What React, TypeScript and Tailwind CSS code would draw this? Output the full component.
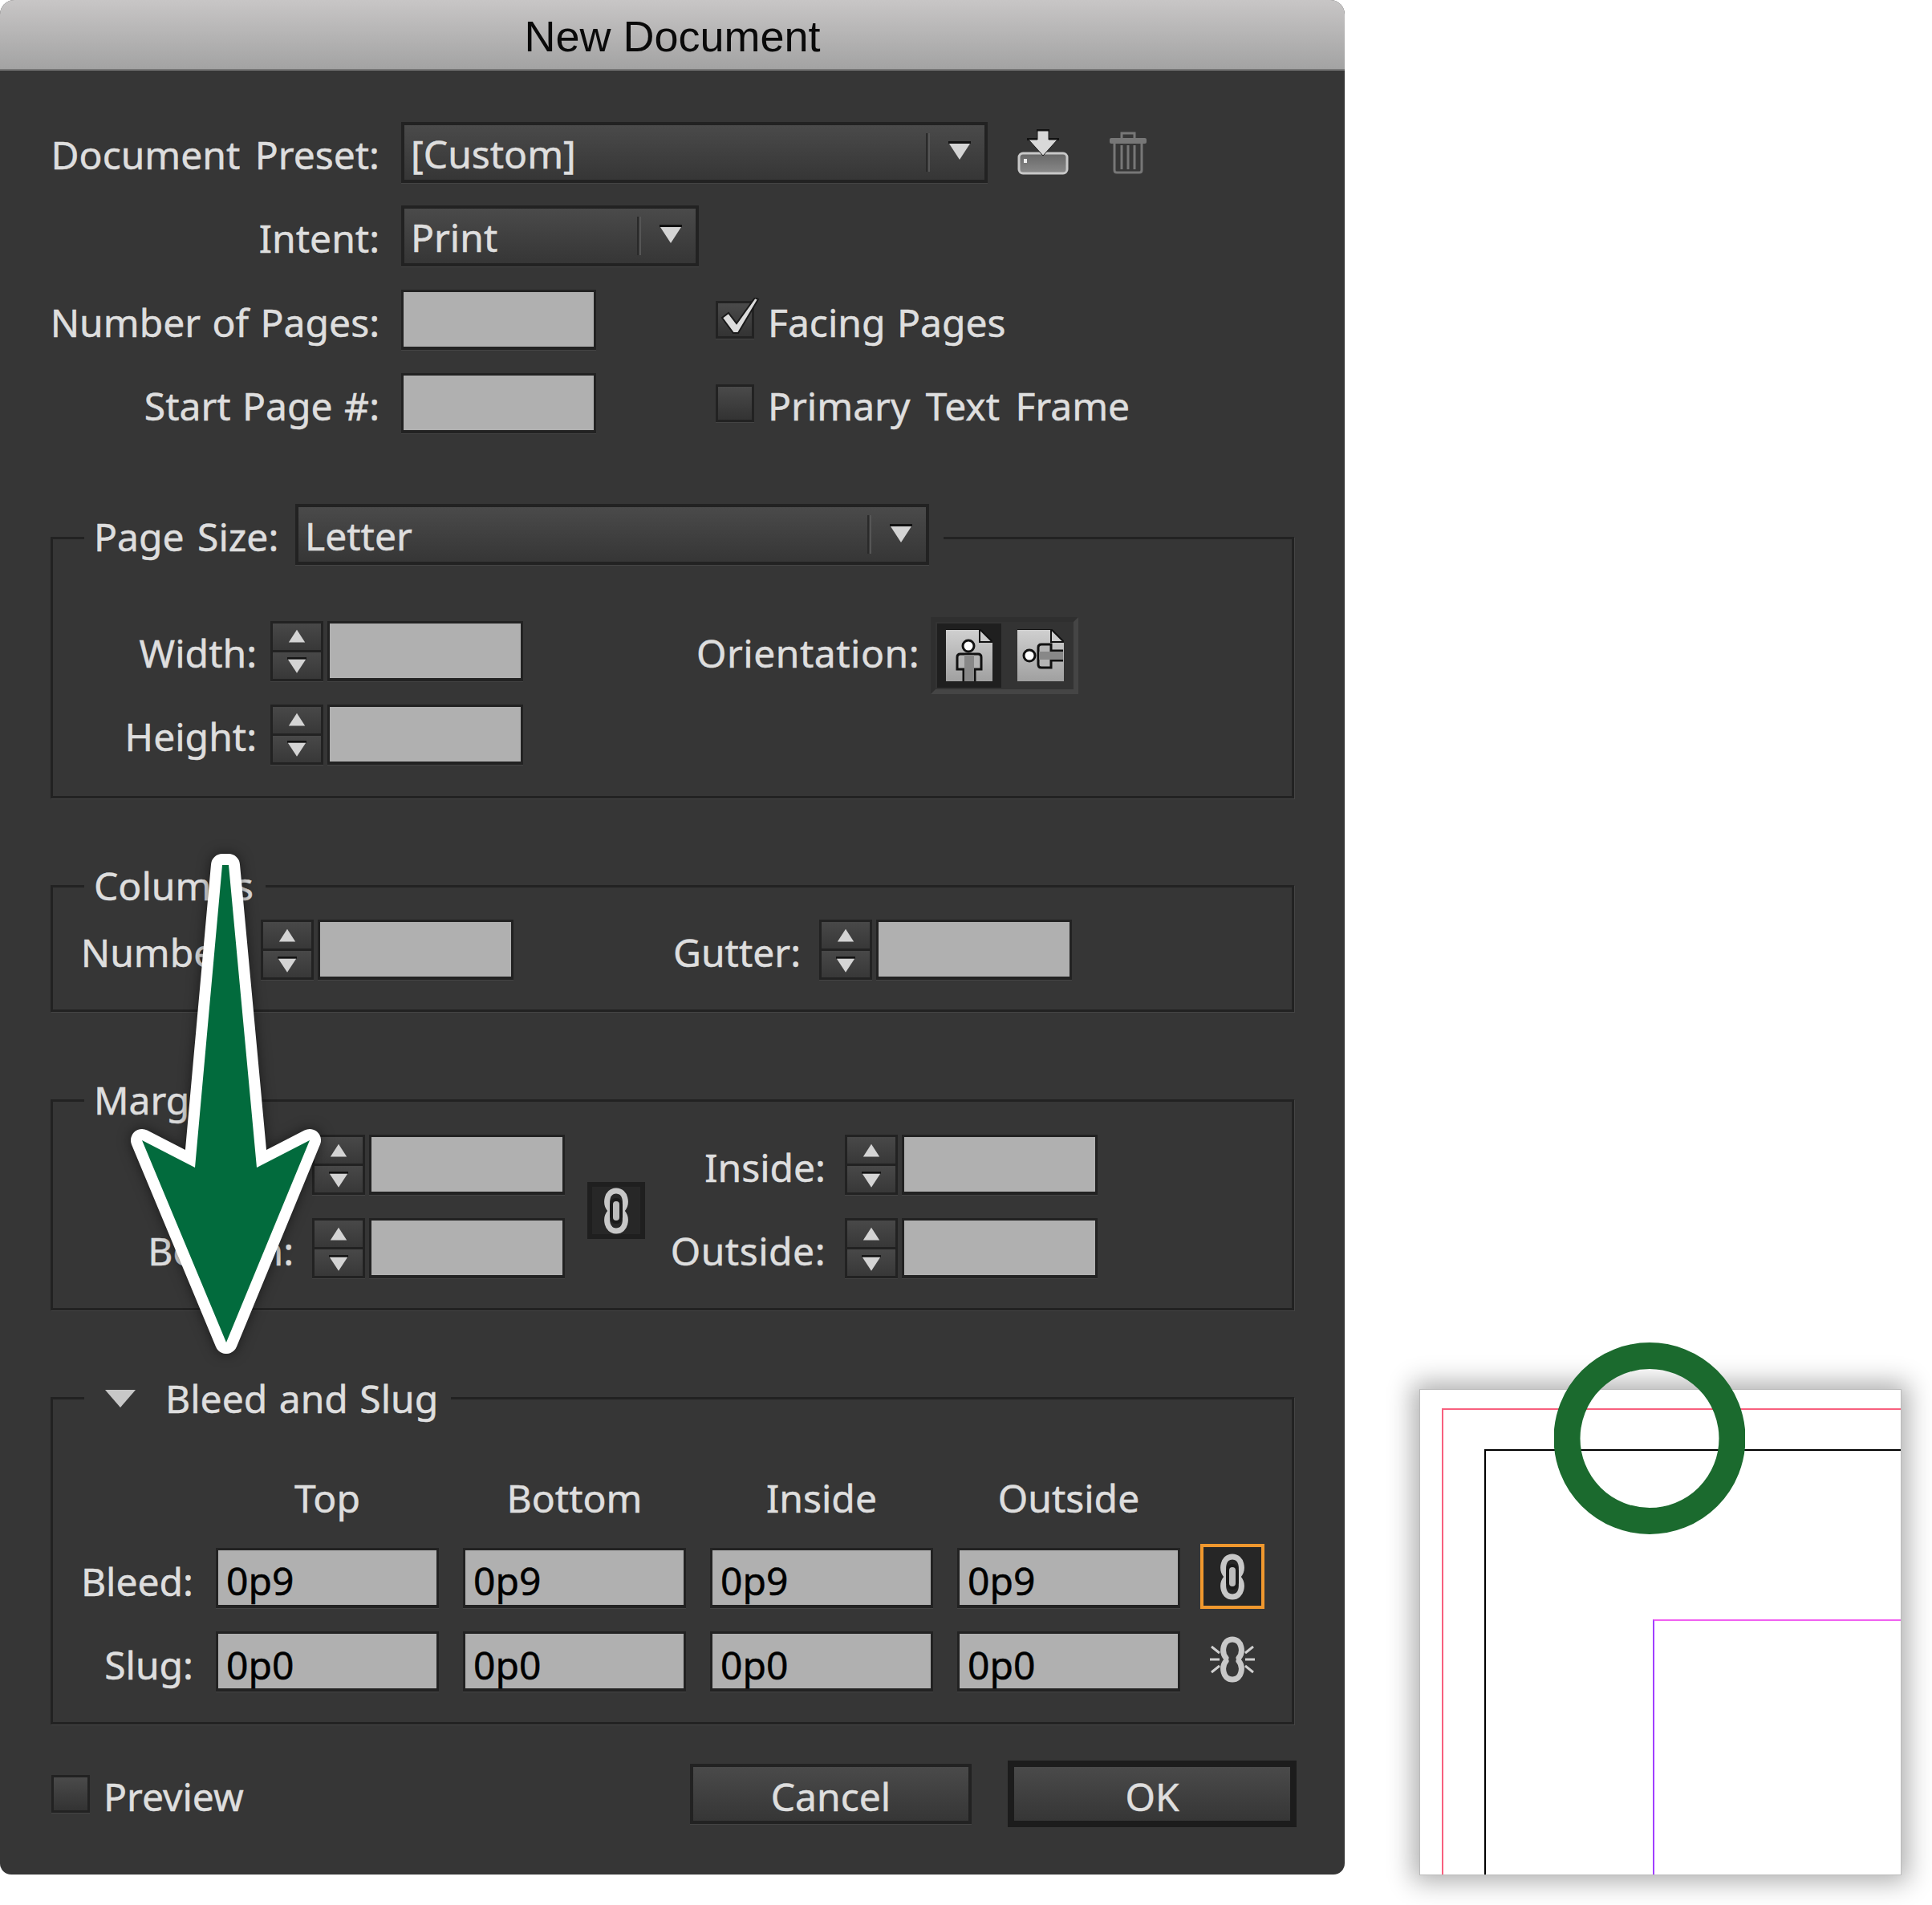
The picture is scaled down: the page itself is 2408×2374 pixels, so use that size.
import type { ReactNode } from "react";

const inputBox = "h-[75px] border-[3px] border-[#222] bg-[#b0b0b0] shadow-[0_1px_0_#444] border-b-[4px]";
const raised = "border-[4px] border-[#222] bg-gradient-to-b from-[#4a4a4a] to-[#363636] shadow-[0_1px_0_#444]";

function Label({ className, children }: { className: string; children: ReactNode }) {
  return <span className={`pt-[6px] text-right ${className}`}>{children}</span>;
}

function Triangle({ up = false, className = "w-[28px] h-[23px]" }: { up?: boolean; className?: string }) {
  return (
    <svg viewBox="0 0 28 23" className={className}>
      {up ? (
        <polygon points="14,1 27,21 1,21" fill="#d4d4d4" />
      ) : (
        <>
          <rect x="0" y="0" width="28" height="3" fill="#111" />
          <polygon points="1,3 27,3 14,23" fill="#d4d4d4" />
        </>
      )}
    </svg>
  );
}

function Select({ value, className }: { value: string; className: string }) {
  return (
    <div className={`flex h-[76px] items-center ${raised} ${className}`}>
      <span className="flex-1 pl-[8px] pt-[4px]">{value}</span>
      <div className="h-[48px] w-[5px] border-x-[2px] border-l-[#2a2a2a] border-r-[#555] bg-[#3c3c3c]" />
      <div className="flex w-[68px] justify-center pb-[4px] pl-[5px]">
        <Triangle />
      </div>
    </div>
  );
}

function Stepper() {
  return (
    <div className="flex h-[75px] w-[66px] shrink-0 flex-col gap-[3px] border-[3px] border-[#222] bg-[#222] shadow-[0_1px_0_#444]">
      <div className="flex flex-1 items-center justify-center bg-gradient-to-b from-[#484848] to-[#383838]">
        <Triangle up className="h-[18px] w-[24px]" />
      </div>
      <div className="flex flex-1 items-center justify-center bg-gradient-to-b from-[#484848] to-[#383838]">
        <Triangle className="h-[20px] w-[24px]" />
      </div>
    </div>
  );
}

function StepField() {
  return (
    <div className="flex gap-[5px]">
      <Stepper />
      <div className={`${inputBox} w-[244px]`} />
    </div>
  );
}

function Checkbox({ children }: { children?: ReactNode }) {
  return (
    <div className="h-[47px] w-[48px] shrink-0 border-[3px] border-[#222] bg-gradient-to-b from-[#4a4a4a] to-[#333] shadow-[0_1px_0_#444]">
      {children}
    </div>
  );
}

function Group({ className, children }: { className: string; children: ReactNode }) {
  return (
    <div className={`ml-[63px] w-[1550px] border-[3px] border-[#222] shadow-[1px_1px_0_#454545] ${className}`}>
      {children}
    </div>
  );
}

function LinkIcon({ broken = false }: { broken?: boolean }) {
  return (
    <svg viewBox="0 0 58 60" className="h-[60px] w-[58px]">
      <g fill="none" stroke="#c8c8c8" strokeWidth="7" strokeLinecap="round">
        <path d="M21 28 C15 21 17 5 29 5 C41 5 43 21 37 28" />
        <path d="M21 32 C15 39 17 55 29 55 C41 55 43 39 37 32" />
      </g>
      {broken ? (
        <g stroke="#d0d0d0" strokeWidth="3">
          <path d="M1 30 H13 M45 30 H57 M3 14 L13 22 M55 14 L45 22 M3 46 L13 38 M55 46 L45 38" />
        </g>
      ) : (
        <>
          <rect x="21" y="14" width="16" height="32" rx="8" fill="#1a1a1a" />
          <rect x="25" y="18" width="8" height="24" rx="4" fill="#bbb" />
        </>
      )}
    </svg>
  );
}

function PortraitDoc() {
  return (
    <svg viewBox="0 0 58 66" className="h-[66px] w-[58px]">
      <defs>
        <linearGradient id="page-a" x1="0" y1="0" x2="0" y2="1">
          <stop offset="0" stopColor="#d0d0d0" />
          <stop offset="1" stopColor="#a0a0a0" />
        </linearGradient>
      </defs>
      <polygon points="0,0 42,0 58,16 58,65 0,65" fill="url(#page-a)" />
      <polygon points="42,0 58,16 42,16" fill="#ccc" stroke="#111" strokeWidth="2" />
      <path d="M0 0 H42" stroke="#111" strokeWidth="2" />
      <circle cx="28" cy="21" r="7" fill="#fff" stroke="#111" strokeWidth="3" />
      <path d="M22 65 V50 H14 V35 q0-4 4-4 H40 q4 0 4 4 V50 H36 V65" fill="#b4b4b4" stroke="#111" strokeWidth="3" />
      <rect x="23" y="32" width="12" height="33" fill="#888" />
    </svg>
  );
}

function LandscapeDoc() {
  return (
    <svg viewBox="0 0 58 66" className="h-[66px] w-[58px]">
      <defs>
        <linearGradient id="page-b" x1="0" y1="0" x2="0" y2="1">
          <stop offset="0" stopColor="#d0d0d0" />
          <stop offset="1" stopColor="#a0a0a0" />
        </linearGradient>
      </defs>
      <polygon points="0,0 42,0 58,16 58,65 0,65" fill="url(#page-b)" />
      <polygon points="42,0 58,16 42,16" fill="#ccc" stroke="#111" strokeWidth="2" />
      <path d="M0 0 H42" stroke="#111" strokeWidth="2" />
      <circle cx="15" cy="33" r="7" fill="#fff" stroke="#111" strokeWidth="3" />
      <path d="M57 27 H42 V19 H30 q-4 0 -4 4 V44 q0 4 4 4 H42 V39 H57" fill="#b4b4b4" stroke="#111" strokeWidth="3" />
      <rect x="27" y="28" width="30" height="10" fill="#888" />
    </svg>
  );
}

function SaveIcon() {
  return (
    <svg viewBox="0 0 64 57" className="ml-[37px] h-[57px] w-[64px]">
      <defs>
        <linearGradient id="tray" x1="0" y1="0" x2="0" y2="1">
          <stop offset="0" stopColor="#666" />
          <stop offset="1" stopColor="#8a8a8a" />
        </linearGradient>
      </defs>
      <rect x="2" y="30" width="60" height="25" rx="5" fill="url(#tray)" stroke="#c8c8c8" strokeWidth="3" />
      <rect x="8" y="37" width="4" height="5" fill="#eee" />
      <path d="M24 0 H40 V3 H24 Z M12 11 H52 V14 H12 Z" fill="#111" />
      <polygon points="25,2 39,2 39,13 50,13 32,33 14,13 25,13" fill="#d8d8d8" stroke="#1a1a1a" strokeWidth="1" />
    </svg>
  );
}

function TrashIcon() {
  return (
    <svg viewBox="0 0 46 54" className="ml-[51px] h-[54px] w-[46px]">
      <g fill="none" stroke="#777" strokeWidth="3">
        <path d="M15 9 V3 H31 V9" />
        <path d="M6 15 V49 q0 3 3 3 H37 q3 0 3-3 V15" />
        <path d="M15 18 V48 M23 18 V48 M31 18 V48" />
      </g>
      <rect x="0" y="9" width="46" height="7" rx="2" fill="#777" />
    </svg>
  );
}

export default function App() {
  return (
    <div
      className="flex h-[2374px] w-[2408px] items-start overflow-hidden whitespace-nowrap bg-white text-[48px] leading-none text-[#dedede] [-webkit-text-stroke:0.5px_currentColor] [word-spacing:2px]"
      style={{ fontFamily: '"Noto Sans", sans-serif' }}
    >
      <div className="relative flex h-[2336px] w-[1676px] shrink-0 flex-col rounded-b-[14px] rounded-t-[18px] bg-[#363636]">
        <div
          className="flex h-[88px] items-center justify-center rounded-t-[18px] border-b-[2px] border-[#777] bg-gradient-to-b from-[#c8c6c6] to-[#a3a3a3] pt-[3px] text-[54px] text-[#0a0a0a] [-webkit-text-stroke:0] [word-spacing:0]"
          style={{ fontFamily: '"Liberation Sans", sans-serif' }}
        >
          New Document
        </div>

        <div className="mt-[64px] flex flex-col gap-[29px]">
          <div className="flex h-[75px] items-center">
            <Label className="mr-[27px] w-[473px] [word-spacing:6px]">Document Preset:</Label>
            <Select value="[Custom]" className="w-[731px]" />
            <SaveIcon />
            <TrashIcon />
          </div>
          <div className="flex h-[75px] items-center">
            <Label className="mr-[27px] w-[473px]">Intent:</Label>
            <Select value="Print" className="w-[371px]" />
          </div>
          <div className="mt-[1px] flex h-[75px] items-center">
            <Label className="mr-[27px] w-[473px]">Number of Pages:</Label>
            <div className={`${inputBox} w-[243px]`} />
            <div className="relative ml-[149px]">
              <Checkbox />
              <svg viewBox="0 0 52 50" className="absolute -top-[4px] left-[4px] h-[50px] w-[52px]">
                <polygon points="4,25 12,19 22,32 45,0 49,2 24,44 18,44" fill="#dcdcdc" stroke="#1a1a1a" strokeWidth="2" />
              </svg>
            </div>
            <span className="ml-[17px] pt-[6px]">Facing Pages</span>
          </div>
          <div className="flex h-[75px] items-center">
            <Label className="mr-[27px] w-[473px]">Start Page #:</Label>
            <div className={`${inputBox} w-[243px]`} />
            <div className="ml-[149px]">
              <Checkbox />
            </div>
            <span className="ml-[17px] pt-[6px] [word-spacing:7px]">Primary Text Frame</span>
          </div>
        </div>

        <Group className="mt-[129px] pb-[39px]">
          <div className="-mt-[44px] ml-[39px] flex w-fit items-center bg-[#363636] pl-[12px] pr-[18px]">
            <span className="mr-[21px] w-[230px] pt-[6px] [word-spacing:4px]">Page Size:</span>
            <Select value="Letter" className="w-[790px]" />
          </div>
          <div className="mt-[69px] flex items-start">
            <div className="flex flex-col gap-[28px]">
              <div className="flex h-[76px] items-center">
                <Label className="mr-[17px] w-[254px]">Width:</Label>
                <StepField />
              </div>
              <div className="flex h-[76px] items-center">
                <Label className="mr-[17px] w-[254px]">Height:</Label>
                <StepField />
              </div>
            </div>
            <div className="flex h-[76px] items-center">
              <Label className="mr-[14px] w-[494px] tracking-[0.5px]">Orientation:</Label>
              <div className="mt-[12px] flex h-[96px] w-[184px] items-center gap-[20px] border-[6px] border-b-[#454545] border-l-[#2f2f2f] border-r-[#454545] border-t-[#2f2f2f] bg-[#333] pl-[2px]">
                <div className="flex h-[80px] w-[80px] items-center justify-center bg-[#1f1f1f]">
                  <PortraitDoc />
                </div>
                <LandscapeDoc />
              </div>
            </div>
          </div>
        </Group>

        <Group className="mt-[108px] pb-[37px]">
          <div className="-mt-[32px] ml-[39px] flex h-[60px] w-fit items-center bg-[#363636] pl-[12px] pr-[15px]">
            Columns
          </div>
          <div className="mt-[12px] flex items-center">
            <Label className="mr-[24px] w-[235px]">Number:</Label>
            <StepField />
            <Label className="mr-[23px] w-[358px]">Gutter:</Label>
            <StepField />
          </div>
        </Group>

        <Group className="mt-[109px] pb-[37px]">
          <div className="-mt-[32px] ml-[39px] flex h-[60px] w-fit items-center bg-[#363636] pl-[12px] pr-[15px]">
            Margins
          </div>
          <div className="mt-[13px] flex items-center">
            <div className="flex flex-col gap-[29px]">
              <div className="flex items-center">
                <Label className="mr-[23px] w-[300px]">Top:</Label>
                <StepField />
              </div>
              <div className="flex items-center">
                <Label className="mr-[23px] w-[300px]">Bottom:</Label>
                <StepField />
              </div>
            </div>
            <div className="ml-[28px] mt-[10px] flex h-[71px] w-[72px] items-center justify-center border-[6px] border-[#1f1f1f] bg-[#272727]">
              <LinkIcon />
            </div>
            <div className="flex flex-col gap-[29px]">
              <div className="flex items-center">
                <Label className="mr-[24px] w-[225px]">Inside:</Label>
                <StepField />
              </div>
              <div className="flex items-center">
                <Label className="mr-[24px] w-[225px] tracking-[0.5px]">Outside:</Label>
                <StepField />
              </div>
            </div>
          </div>
        </Group>

        <Group className="mt-[108px] pb-[38px]">
          <div className="-mt-[31px] ml-[39px] flex h-[60px] w-fit items-center bg-[#363636] pl-[26px] pr-[16px]">
            <svg viewBox="0 0 38 22" className="mr-[37px] h-[22px] w-[38px]">
              <polygon points="0,0 38,0 19,22" fill="#c8c8c8" />
            </svg>
            Bleed and Slug
          </div>
          <div className="mt-[66px] grid grid-cols-[173px_repeat(4,278px)_80px] items-center gap-x-[30px] gap-y-[28px]">
            <span />
            {["Top", "Bottom", "Inside", "Outside"].map((head) => (
              <span key={head} className="h-[60px] pt-[4px] text-center">
                {head}
              </span>
            ))}
            <span />
            <Label className="-mr-[2px] !pt-[9px]">Bleed:</Label>
            {[0, 1, 2, 3].map((i) => (
              <div key={i} className={`${inputBox} flex items-center pl-[10px] pt-[9px] text-black`}>
                0p9
              </div>
            ))}
            <div className="-ml-[5px] -mt-[3px] flex h-[81px] w-[80px] items-center justify-center border-[4px] border-[#f0982e] bg-[#262626]">
              <LinkIcon />
            </div>
            <Label className="-mr-[2px] !pt-[9px]">Slug:</Label>
            {[0, 1, 2, 3].map((i) => (
              <div key={i} className={`${inputBox} flex items-center pl-[10px] pt-[9px] text-black`}>
                0p0
              </div>
            ))}
            <div className="-ml-[5px] -mt-[5px] flex w-[80px] justify-center">
              <LinkIcon broken />
            </div>
          </div>
        </Group>

        <div className="ml-[64px] mr-[60px] mt-[45px] flex h-[83px] items-center">
          <Checkbox />
          <span className="ml-[17px] pt-[6px]">Preview</span>
          <div className={`ml-auto flex h-[75px] w-[351px] items-center justify-center pt-[6px] ${raised}`}>Cancel</div>
          <div className="ml-[45px] flex h-[83px] w-[360px] items-center justify-center border-[8px] border-[#1c1c1c] bg-gradient-to-b from-[#4a4a4a] to-[#363636] pt-[6px]">
            OK
          </div>
        </div>

        <svg
          viewBox="150 1050 270 650"
          className="absolute left-[150px] top-[1050px] h-[650px] w-[270px] drop-shadow-[0_0_8px_rgba(0,0,0,0.5)]"
        >
          <polygon
            points="277,1078 285,1078 320,1455 386,1421 282,1673 177,1421 243,1455"
            fill="#fff"
            stroke="#fff"
            strokeWidth="28"
            strokeLinejoin="round"
          />
          <polygon points="277,1078 285,1078 320,1455 386,1421 282,1673 177,1421 243,1455" fill="#026b3d" />
        </svg>
      </div>

      <div className="relative ml-[93px] mt-[1731px] flex h-[606px] w-[601px] flex-col border border-[#bbb] bg-white shadow-[0_0_30px_8px_rgba(0,0,0,0.32)]">
        <div className="ml-[27px] mt-[23px] flex flex-1 flex-col border-l-2 border-t-2 border-[#f8607e]">
          <div className="ml-[51px] mt-[49px] flex flex-1 flex-col border-l-2 border-t-2 border-black">
            <div className="ml-[208px] mt-[210px] flex-1 border-l-2 border-t-2 border-l-[#a040ff] border-t-[#f060f0]" />
          </div>
        </div>
        <svg viewBox="0 0 238 239" className="absolute -top-[59px] left-[167px] h-[239px] w-[238px]">
          <circle cx="119" cy="119.5" r="103" fill="none" stroke="#1b6a2e" strokeWidth="33" />
        </svg>
      </div>
    </div>
  );
}
